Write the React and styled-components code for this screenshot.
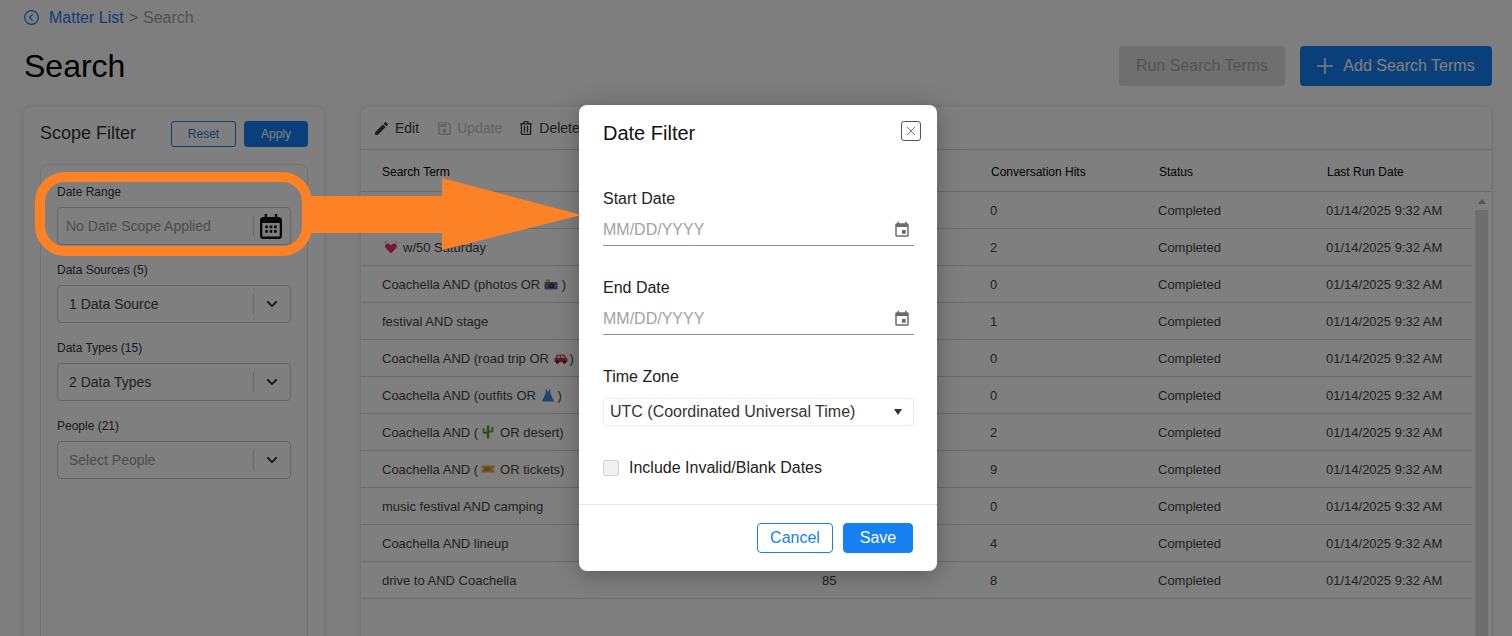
import React from "react";
import styled, { createGlobalStyle } from "styled-components";
import { MdEdit, MdOutlineSave, MdEvent } from "react-icons/md";
import { FaRegTrashAlt, FaChevronDown } from "react-icons/fa";

const Global = createGlobalStyle`
  html, body { margin: 0; padding: 0; height: 100%; overflow: hidden; background: #fcfcfc; }
  body, button, input { font-family: "Liberation Sans", Arial, sans-serif; }
  * { box-sizing: border-box; }
`;

const Page = styled.div`
  position: relative;
  width: 1512px;
  height: 636px;
  overflow: hidden;
  padding: 8px 20px 0 24px;
`;
const Crumbs = styled.nav`
  display: flex;
  align-items: center;
  height: 18px;
  padding-top: 1px;
  font-size: 16px;
  line-height: 18px;
  color: #999;
`;
const CrumbLink = styled.a`
  color: #1f7ae8;
  margin: 0 5px 0 10px;
`;
const CrumbCurrent = styled.span`
  margin-left: 5px;
  color: #a4a4a4;
`;
const HeaderRow = styled.header`
  display: flex;
  align-items: center;
  justify-content: space-between;
  height: 40px;
  margin-top: 20px;
`;
const Title = styled.h1`
  margin: 0;
  font-size: 32px;
  font-weight: 400;
  color: #000;
`;
const HeaderActions = styled.div`
  display: flex;
  gap: 15px;
`;
const BigButton = styled.button`
  display: flex;
  align-items: center;
  justify-content: center;
  gap: 10px;
  height: 40px;
  width: ${(p) => p.$w}px;
  border: 0;
  border-radius: 4px;
  font-size: 16px;
  background: ${(p) => (p.$primary ? "#1580f4" : "#dedede")};
  color: ${(p) => (p.$primary ? "#fff" : "#a6a6a6")};
`;
const Columns = styled.div`
  display: grid;
  grid-template-columns: 300px 1130px;
  column-gap: 37px;
  margin-top: 21px;
`;
const Panel = styled.section`
  height: 560px;
  background: #fff;
  border-radius: 8px;
  box-shadow: 0 1px 6px rgba(0, 0, 0, 0.14);
  overflow: hidden;
`;
const ScopePanel = styled(Panel)`
  padding: 14px 16px 0;
`;
const ScopeHead = styled.div`
  display: flex;
  align-items: center;
  justify-content: space-between;
  height: 26px;
`;
const ScopeTitle = styled.h2`
  margin: 0 0 2px;
  font-size: 18px;
  font-weight: 400;
  color: #333;
`;
const ScopeActions = styled.div`
  display: flex;
  gap: 8px;
`;
const SmallButton = styled.button`
  height: 26px;
  width: ${(p) => p.$w}px;
  padding: 0;
  border: 1px solid #1580f4;
  border-radius: 3px;
  font-size: 12px;
  background: ${(p) => (p.$primary ? "#1580f4" : "#fff")};
  color: ${(p) => (p.$primary ? "#fff" : "#1f7ae8")};
`;
const FilterBox = styled.div`
  margin-top: 17px;
  height: 500px;
  padding: 18px 16px 0 16px;
  border: 1px solid #e6e6e6;
  border-radius: 8px;
`;
const Field = styled.div`
  margin-bottom: 16px;
`;
const FieldLabel = styled.div`
  height: 16px;
  padding-top: 1px;
  font-size: 12px;
  line-height: 16px;
  color: #333;
`;
const Control = styled.div`
  display: flex;
  align-items: center;
  height: 38px;
  margin-top: 8px;
  padding-left: ${(p) => p.$pad}px;
  border: 1px solid #ccc;
  border-radius: 4px;
  font-size: 14px;
  color: ${(p) => (p.$muted ? "#999" : "#444")};
`;
const ControlText = styled.span`
  flex: 1;
`;
const ControlDivider = styled.span`
  width: 1px;
  height: 20px;
  background: #ccc;
`;
const ControlIcon = styled.span`
  display: flex;
  align-items: center;
  justify-content: center;
  width: 36px;
  padding-right: ${(p) => p.$shift || 0}px;
  color: #333;
`;
const TablePanel = styled(Panel)`
  display: flex;
  flex-direction: column;
`;
const Toolbar = styled.div`
  display: flex;
  align-items: center;
  height: 43px;
  padding-left: 12px;
  border-bottom: 1px solid #d4d4d4;
`;
const Tool = styled.span`
  display: flex;
  align-items: center;
  gap: ${(p) => p.$gap ?? 5}px;
  margin-right: 17px;
  font-size: 14px;
  color: ${(p) => (p.$disabled ? "#c4c4c4" : "#3a3a3a")};
`;
const cols = "440px 168px 168px 168px 1fr";
const HeadRow = styled.div`
  display: grid;
  grid-template-columns: ${cols};
  align-items: center;
  height: 42px;
  padding: 2px 0 0 21px;
  border-bottom: 1px solid #d4d4d4;
  font-size: 12px;
  color: #000;
`;
const HeadCell = styled.span`
  padding-left: ${(p) => (p.$first ? 0 : 1)}px;
`;
const TableBody = styled.div`
  flex: 1;
  display: flex;
  min-height: 0;
`;
const Rows = styled.div`
  width: 1111px;
`;
const Row = styled.div`
  display: grid;
  grid-template-columns: ${cols};
  align-items: center;
  height: 37px;
  padding-left: 21px;
  border-bottom: 1px solid #d4d4d4;
  font-size: 13px;
  color: #444;
`;
const Cell = styled.span`
  display: flex;
  align-items: center;
  white-space: pre;
`;
const Scrollbar = styled.div`
  width: 19px;
  padding: 0 3px;
  display: flex;
  flex-direction: column;
  align-items: stretch;
`;
const ScrollArrow = styled.div`
  height: 18px;
  display: flex;
  align-items: center;
  justify-content: center;
  &::before {
    content: "";
    border-left: 4px solid transparent;
    border-right: 4px solid transparent;
    border-bottom: 5px solid #a8a8a8;
  }
`;
const ScrollThumb = styled.div`
  flex: 1;
  background: #dcdcdc;
`;
const Dim = styled.div`
  position: absolute;
  inset: 0;
  background: rgba(0, 0, 0, 0.5);
`;
const Modal = styled.div`
  position: absolute;
  left: 579px;
  top: 105px;
  width: 358px;
  height: 466px;
  background: #fff;
  border-radius: 8px;
  box-shadow: 0 4px 24px rgba(0, 0, 0, 0.3);
  display: flex;
  flex-direction: column;
`;
const ModalHead = styled.div`
  display: flex;
  align-items: flex-start;
  justify-content: space-between;
  padding: 16px 16px 0 24px;
  height: 84px;
`;
const ModalTitle = styled.h3`
  margin: 0;
  font-size: 20px;
  line-height: 24px;
  font-weight: 400;
  color: #111;
`;
const CloseButton = styled.button`
  width: 20px;
  height: 20px;
  padding: 0;
  display: flex;
  align-items: center;
  justify-content: center;
  background: #fff;
  border: 1px solid #555;
  border-radius: 3px;
`;
const ModalBody = styled.div`
  flex: 1;
  padding: 0 23px 0 24px;
`;
const DateField = styled.div`
  height: 89px;
`;
const ModalLabel = styled.div`
  height: 20px;
  font-size: 16px;
  line-height: 20px;
  color: #222;
`;
const DateInput = styled.div`
  display: flex;
  align-items: center;
  justify-content: space-between;
  height: 36px;
  margin-top: 1px;
  padding: 5px 3px 0 0;
  border-bottom: 1px solid #8f8f8f;
  font-size: 16px;
  color: #a2a2a2;
`;
const Select = styled.div`
  display: flex;
  align-items: center;
  justify-content: space-between;
  height: 28px;
  margin-top: 11px;
  padding: 0 11px 0 6px;
  border: 1px solid #ececec;
  border-radius: 3px;
  font-size: 16px;
  color: #333;
  &::after {
    content: "";
    border-left: 4.5px solid transparent;
    border-right: 4.5px solid transparent;
    border-top: 6px solid #333;
  }
`;
const CheckRow = styled.label`
  display: flex;
  align-items: center;
  gap: 10px;
  margin-top: 32px;
  font-size: 16px;
  line-height: 20px;
  color: #222;
`;
const CheckBox = styled.span`
  width: 16px;
  height: 16px;
  background: #f1f1f1;
  border: 1px solid #d0d0d0;
  border-radius: 3px;
`;
const ModalFoot = styled.div`
  display: flex;
  justify-content: flex-end;
  gap: 10px;
  height: 67px;
  padding: 18px 24px 0 0;
  border-top: 1px solid #e3e6ea;
`;
const FootButton = styled.button`
  width: ${(p) => p.$w}px;
  height: 30px;
  padding: 0;
  border: 1px solid #1681f0;
  border-radius: 4px;
  font-size: 16px;
  background: ${(p) => (p.$primary ? "#1681f0" : "#fff")};
  color: ${(p) => (p.$primary ? "#fff" : "#1681f0")};
`;
const Annotation = styled.svg`
  position: absolute;
  left: 0;
  top: 0;
  pointer-events: none;
`;
const Emoji = styled.svg`
  width: 14px;
  height: 14px;
  margin: 0 ${(p) => p.$r ?? 3}px 0 ${(p) => p.$l ?? 3}px;
  flex: none;
`;

const Back = () => (
  <svg width="15" height="15" viewBox="0 0 15 15" fill="none" stroke="#1f7ae8" strokeWidth="1.2">
    <circle cx="7.5" cy="7.5" r="6.8" />
    <path d="M8.8 4.2 5.5 7.5l3.3 3.3" />
  </svg>
);
const BigCalendar = () => (
  <svg width="22" height="25" viewBox="0 0 23 25" preserveAspectRatio="none">
    <path fill="#111" d="M5 0h2.4v3h8.2V0H18v3h1.5A3.5 3.5 0 0 1 23 6.5v15a3.5 3.5 0 0 1-3.5 3.5h-16A3.5 3.5 0 0 1 0 21.500v-15A3.500 3.500 0 0 1 3.500 3H5zM2.400 9v12.500c0 .6.500 1.100 1.100 1.100h16c.6 0 1.100-.5 1.100-1.100V9z" />
    <path fill="#111" d="M5.500 11.500h2.800v2.800H5.500zm4.600 0h2.800v2.800h-2.800zm4.600 0h2.800v2.800h-2.800zM5.500 16h2.800v2.800H5.500zm4.600 0h2.800v2.800h-2.800zm4.600 0h2.800v2.800h-2.800z" />
  </svg>
);
const Heart = () => (
  <Emoji viewBox="0 0 14 14" $l={2} $r={5}>
    <path fill="#e8336f" d="M7 13.500 1.800 8C.3 6.300 1.300 3.400 3.800 3.400c1.400 0 2.500.8 3.200 2 .7-1.200 1.800-2 3.200-2 2.500 0 3.500 2.900 2 4.600z" />
    <path fill="none" stroke="#f4a6bd" strokeWidth="1.100" d="M.6 3 2.800 1M13.400 3l-2.200-2" />
  </Emoji>
);
const Camera = () => (
  <Emoji viewBox="0 0 14 14" $l={0} $r={4}>
    <rect x="2" y="2.500" width="4" height="2.500" fill="#d9b23c" />
    <rect x="0.500" y="5" width="13" height="7.500" rx="1" fill="#6a6f9e" />
    <circle cx="7.500" cy="8.700" r="2.500" fill="#22243a" />
    <circle cx="7.500" cy="8.700" r="1.100" fill="#8d93c0" />
  </Emoji>
);
const Car = () => (
  <Emoji viewBox="0 0 14 14" $l={1} $r={2}>
    <path fill="#d5322f" d="M1 7.500 3 3.500h7.500L12.500 7l1 1v3H.5V8z" />
    <path fill="#b9dcf2" d="M3.700 4.500h2.500V7H2.600zM7 4.500h3l1 2.500H7z" />
    <circle cx="3.500" cy="11" r="1.800" fill="#2a2a2a" />
    <circle cx="10.500" cy="11" r="1.800" fill="#2a2a2a" />
  </Emoji>
);
const Dress = () => (
  <Emoji viewBox="0 0 14 14" $l={1} $r={3}>
    <path fill="#3d8bd8" d="M4.500 1h1l.3 2.200h2.400L8.500 1h1l-.2 4L13 13.500H1L4.700 5z" />
  </Emoji>
);
const Cactus = () => (
  <Emoji viewBox="0 0 14 14" $l={3} $r={5}>
    <path fill="#5fa32e" d="M5.700 1.500a1.300 1.300 0 0 1 2.600 0V13.500H5.700z" />
    <path fill="#5fa32e" d="M1.600 4a1 1 0 0 1 2 0v2.700h2.600v2H3.100a1.500 1.500 0 0 1-1.500-1.500zM10.400 2.800a1 1 0 0 1 2 0V6a1.500 1.500 0 0 1-1.500 1.500H8v-2h2.400z" />
  </Emoji>
);
const Ticket = () => (
  <Emoji viewBox="0 0 14 14" $l={3} $r={5}>
    <path fill="#e6b33d" d="M.5 3.500h13v2.200a1.300 1.300 0 0 0 0 2.600v2.200H.5V8.300a1.300 1.300 0 0 0 0-2.600z" />
    <rect x="3" y="5.300" width="6" height="3.400" fill="#c88a22" />
  </Emoji>
);

const rows = [
  { term: <>Coachella AND festival</>, hits: "12", conv: "0" },
  { term: <><Heart />w/50 Saturday</>, hits: "47", conv: "2" },
  { term: <>Coachella AND (photos OR <Camera />)</>, hits: "31", conv: "0" },
  { term: <>festival AND stage</>, hits: "23", conv: "1" },
  { term: <>Coachella AND (road trip OR <Car />)</>, hits: "16", conv: "0" },
  { term: <>Coachella AND (outfits OR <Dress />)</>, hits: "9", conv: "0" },
  { term: <>Coachella AND (<Cactus />OR desert)</>, hits: "28", conv: "2" },
  { term: <>Coachella AND (<Ticket />OR tickets)</>, hits: "54", conv: "9" },
  { term: <>music festival AND camping</>, hits: "7", conv: "0" },
  { term: <>Coachella AND lineup</>, hits: "62", conv: "4" },
  { term: <>drive to AND Coachella</>, hits: "85", conv: "8" },
];

const filters = [
  { label: "Data Sources (5)", value: "1 Data Source", pad: 11 },
  { label: "Data Types (15)", value: "2 Data Types", pad: 11 },
  { label: "People (21)", value: "Select People", pad: 11, muted: true },
];

export default function App() {
  return (
    <Page>
      <Global />
      <Crumbs>
        <Back />
        <CrumbLink>Matter List</CrumbLink>&gt;<CrumbCurrent>Search</CrumbCurrent>
      </Crumbs>
      <HeaderRow>
        <Title>Search</Title>
        <HeaderActions>
          <BigButton $w={166}>Run Search Terms</BigButton>
          <BigButton $w={192} $primary>
            <svg width="16" height="16" viewBox="0 0 16 16" stroke="#fff" strokeWidth="1.500">
              <path d="M8 0v16M0 8h16" />
            </svg>
            Add Search Terms
          </BigButton>
        </HeaderActions>
      </HeaderRow>
      <Columns>
        <ScopePanel>
          <ScopeHead>
            <ScopeTitle>Scope Filter</ScopeTitle>
            <ScopeActions>
              <SmallButton $w={65}>Reset</SmallButton>
              <SmallButton $w={64} $primary>Apply</SmallButton>
            </ScopeActions>
          </ScopeHead>
          <FilterBox>
            <Field>
              <FieldLabel>Date Range</FieldLabel>
              <Control $pad={8} $muted>
                <ControlText>No Date Scope Applied</ControlText>
                <ControlDivider />
                <ControlIcon $shift={2}><BigCalendar /></ControlIcon>
              </Control>
            </Field>
            {filters.map((f) => (
              <Field key={f.label}>
                <FieldLabel>{f.label}</FieldLabel>
                <Control $pad={f.pad} $muted={f.muted}>
                  <ControlText>{f.value}</ControlText>
                  <ControlDivider />
                  <ControlIcon><FaChevronDown size={12} /></ControlIcon>
                </Control>
              </Field>
            ))}
          </FilterBox>
        </ScopePanel>
        <TablePanel>
          <Toolbar>
            <Tool><MdEdit size={17} />Edit</Tool>
            <Tool $disabled $gap={4}><MdOutlineSave size={17} />Update</Tool>
            <Tool $gap={6}><FaRegTrashAlt size={14} />Delete</Tool>
          </Toolbar>
          <HeadRow>
            <HeadCell $first>Search Term</HeadCell>
            <HeadCell>Hits</HeadCell>
            <HeadCell>Conversation Hits</HeadCell>
            <HeadCell>Status</HeadCell>
            <HeadCell>Last Run Date</HeadCell>
          </HeadRow>
          <TableBody>
            <Rows>
              {rows.map((r, i) => (
                <Row key={i}>
                  <Cell>{r.term}</Cell>
                  <Cell>{r.hits}</Cell>
                  <Cell>{r.conv}</Cell>
                  <Cell>Completed</Cell>
                  <Cell>01/14/2025 9:32 AM</Cell>
                </Row>
              ))}
            </Rows>
            <Scrollbar>
              <ScrollArrow />
              <ScrollThumb />
            </Scrollbar>
          </TableBody>
        </TablePanel>
      </Columns>
      <Dim />
      <Modal>
        <ModalHead>
          <ModalTitle>Date Filter</ModalTitle>
          <CloseButton aria-label="Close">
            <svg width="10" height="10" viewBox="0 0 10 10" stroke="#777" strokeWidth="1">
              <path d="M1 1l8 8M9 1L1 9" />
            </svg>
          </CloseButton>
        </ModalHead>
        <ModalBody>
          <DateField>
            <ModalLabel>Start Date</ModalLabel>
            <DateInput>MM/DD/YYYY<MdEvent size={18} color="#6b6b6b" /></DateInput>
          </DateField>
          <DateField>
            <ModalLabel>End Date</ModalLabel>
            <DateInput>MM/DD/YYYY<MdEvent size={18} color="#6b6b6b" /></DateInput>
          </DateField>
          <ModalLabel>Time Zone</ModalLabel>
          <Select>UTC (Coordinated Universal Time)</Select>
          <CheckRow><CheckBox />Include Invalid/Blank Dates</CheckRow>
        </ModalBody>
        <ModalFoot>
          <FootButton $w={76}>Cancel</FootButton>
          <FootButton $w={70} $primary>Save</FootButton>
        </ModalFoot>
      </Modal>
      <Annotation width="1512" height="636" viewBox="0 0 1512 636">
        <rect x="40" y="177" width="267" height="74" rx="25" fill="none" stroke="#fd8125" strokeWidth="10" />
        <path fill="#fd8125" d="M305 196h137v-18l139 37-139 35v-17H305z" />
      </Annotation>
    </Page>
  );
}
